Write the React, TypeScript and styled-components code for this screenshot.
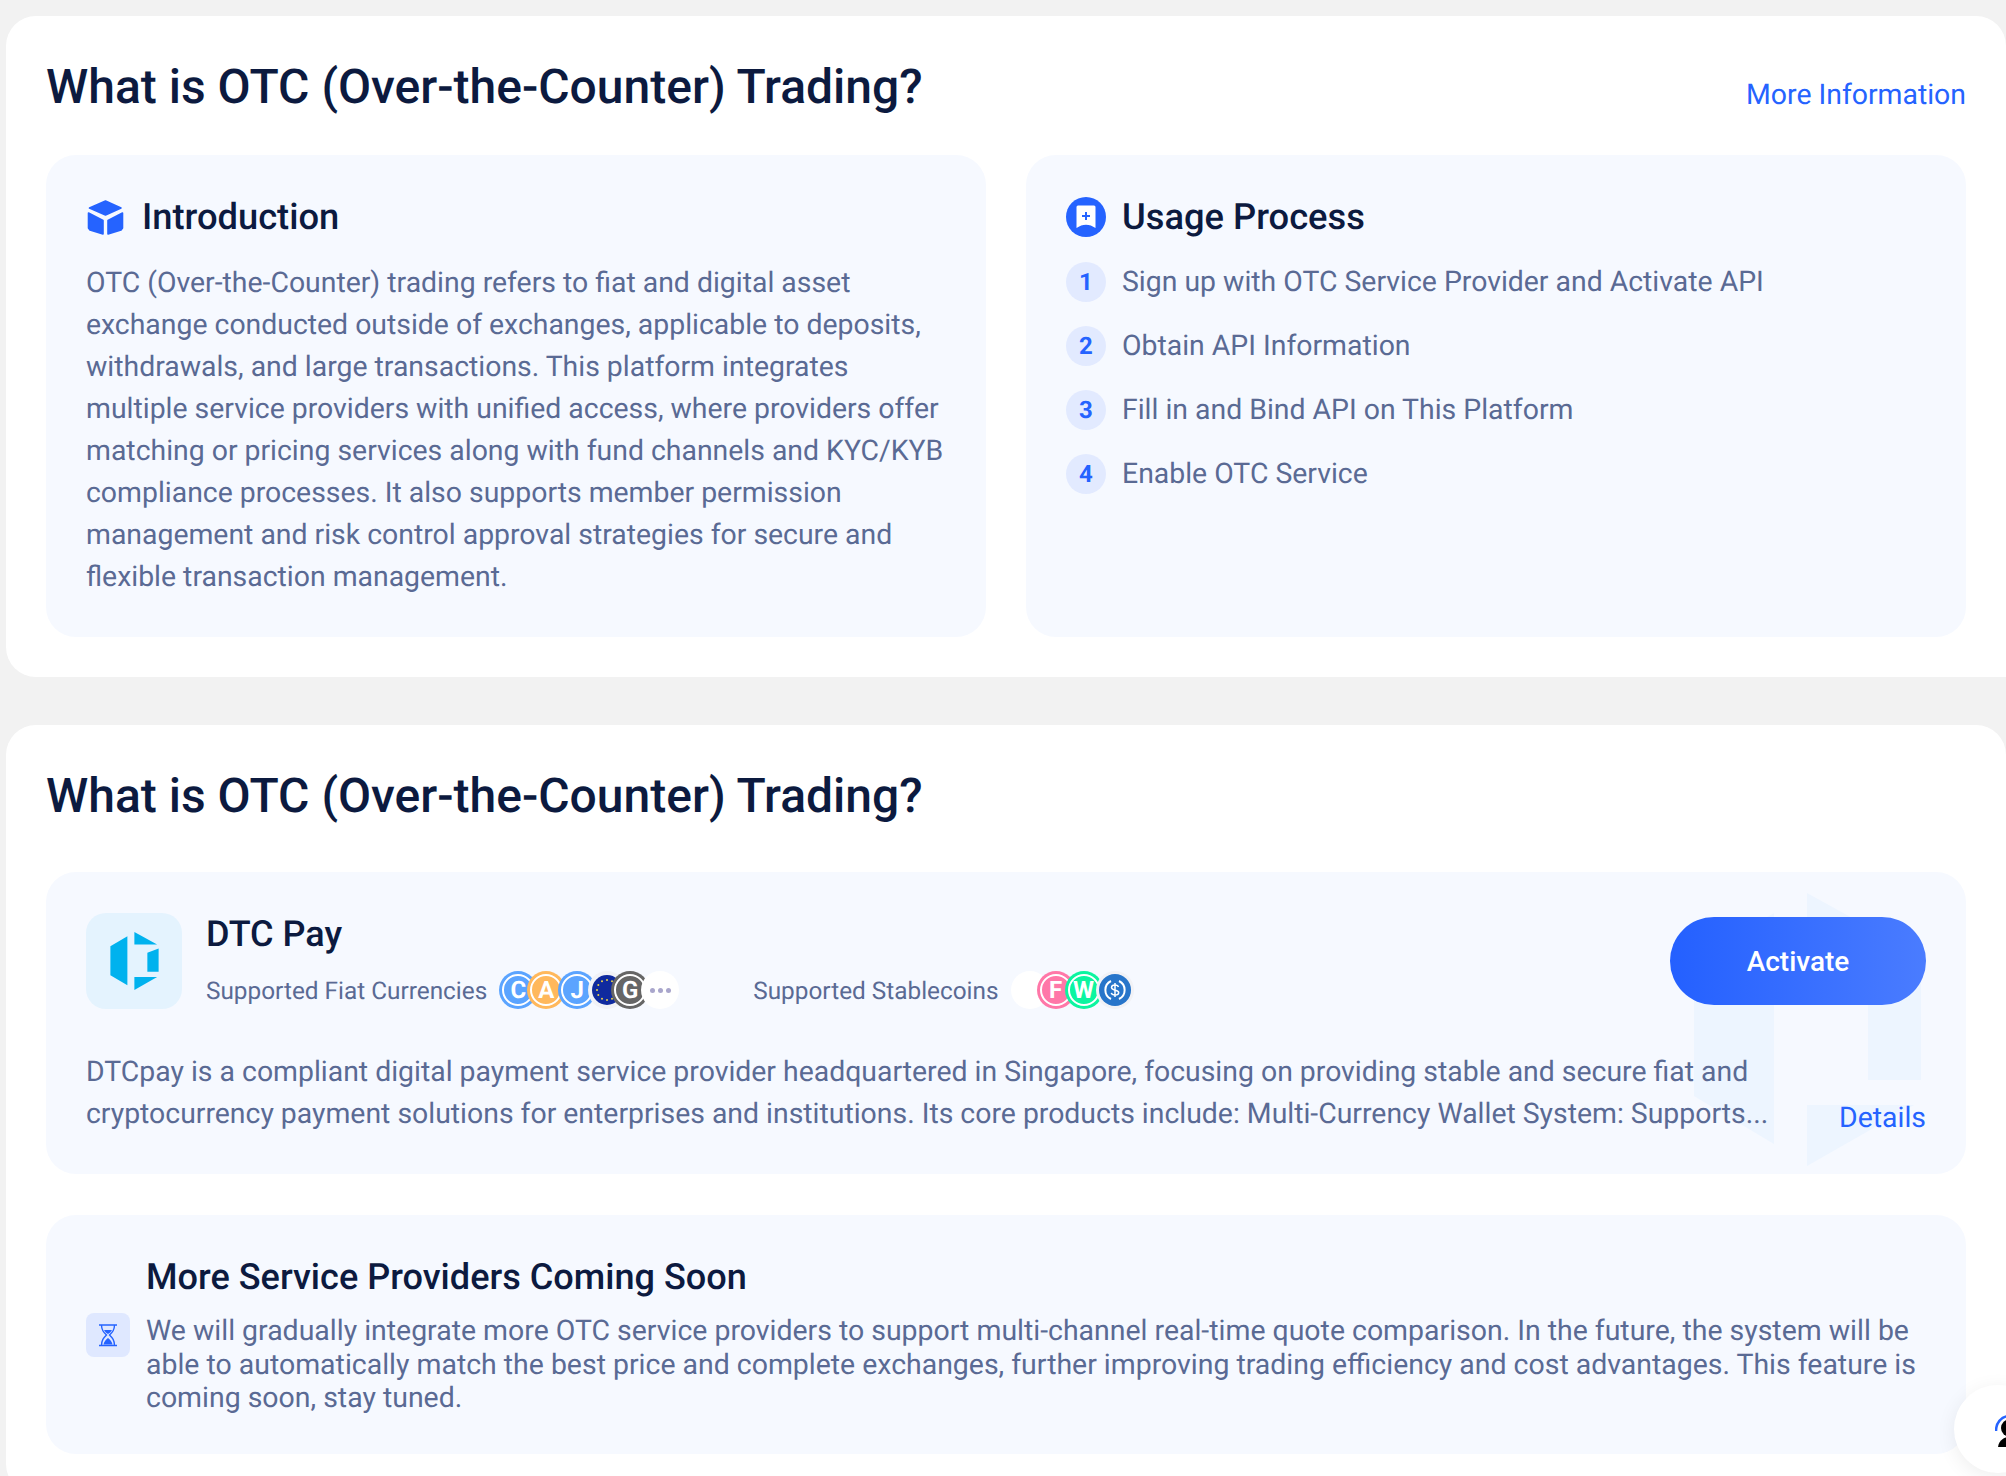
import React from 'react';
import styled, { createGlobalStyle } from 'styled-components';

const GlobalStyle = createGlobalStyle`
  html, body {
    margin: 0;
    padding: 0;
    height: 1476px;
    overflow: hidden;
    background: #f2f2f2;
    font-family: Roboto, "Liberation Sans", sans-serif;
    text-rendering: geometricPrecision;
  }
  * { box-sizing: border-box; }
`;

const Page = styled.div`
  display: flex;
  flex-direction: column;
  gap: 48px;
  padding: 16px 0 0 6px;
  width: 2006px;
`;

const Card = styled.section`
  background: #fff;
  border-radius: 30px 30px 0 30px;
  padding: 40px;
`;

const CardHeader = styled.header<{ $gap: number }>`
  display: flex;
  justify-content: space-between;
  align-items: flex-end;
  margin-bottom: ${(p) => p.$gap}px;
`;

const Title = styled.h1`
  margin: 0;
  padding-top: 1px;
  font-size: 48px;
  line-height: 60px;
  font-weight: 500;
  color: #0c1a3f;
`;

const MoreLink = styled.a`
  margin-bottom: 1px;
  font-size: 28.4px;
  line-height: 42px;
  color: #2563ff;
`;

const Columns = styled.div`
  display: grid;
  grid-template-columns: 1fr 1fr;
  gap: 40px;
`;

const Panel = styled.div`
  position: relative;
  background: #f6f9ff;
  border-radius: 30px;
  padding: 41px 40px 39px;
  overflow: hidden;
`;

const PanelHeading = styled.h2`
  display: flex;
  align-items: center;
  gap: 16px;
  margin: 0 0 24px;
  font-size: 36.3px;
  line-height: 42px;
  font-weight: 500;
  color: #0c1a3f;
`;

const Body = styled.p`
  margin: 0;
  font-size: 28.4px;
  line-height: 42px;
  color: #5a6a94;
`;

const Steps = styled.ol`
  display: flex;
  flex-direction: column;
  gap: 24px;
  margin: 0;
  padding: 0;
  list-style: none;
`;

const Step = styled.li`
  display: flex;
  align-items: center;
  gap: 16px;
  font-size: 28.4px;
  line-height: 40px;
  color: #5a6a94;
`;

const StepNo = styled.span`
  display: flex;
  align-items: center;
  justify-content: center;
  width: 40px;
  height: 40px;
  border-radius: 50%;
  background: #e2eaff;
  color: #2563ff;
  font-size: 24px;
  font-weight: 700;
`;

const Watermark = styled.svg`
  position: absolute;
  left: 1648px;
  top: 21px;
  width: 227px;
  height: 273px;
  fill: #edf5ff;
`;

const ProviderTop = styled.div`
  position: relative;
  display: flex;
  align-items: center;
  gap: 24px;
  margin-bottom: 42px;
`;

const LogoBox = styled.div`
  display: flex;
  align-items: center;
  justify-content: center;
  width: 96px;
  height: 96px;
  border-radius: 20px;
  background: #e4f3fe;
`;

const ProviderInfo = styled.div`
  flex: 1;
  display: flex;
  flex-direction: column;
  gap: 16px;
`;

const ProviderName = styled.h3`
  margin: 0;
  font-size: 36px;
  line-height: 42px;
  font-weight: 500;
  color: #0c1a3f;
`;

const SupportRow = styled.div`
  display: flex;
  align-items: center;
  gap: 74px;
`;

const SupportGroup = styled.div`
  display: flex;
  align-items: center;
  gap: 12px;
  font-size: 24.35px;
  color: #5a6a94;
`;

const Coins = styled.div`
  display: flex;
  align-items: center;
`;

const Coin = styled.span<{ $bg: string; $step?: number }>`
  position: relative;
  display: flex;
  align-items: center;
  justify-content: center;
  width: 38px;
  height: 38px;
  margin-right: ${(p) => (p.$step ?? 28) - 38}px;
  border-radius: 50%;
  background: ${(p) => p.$bg};
  color: #fff;
  font-size: 24px;
  font-weight: 700;
  &::after {
    content: '';
    position: absolute;
    inset: 3px;
    border: 2px solid #fff;
    border-radius: 50%;
  }
`;

const PlainCoin = styled.span<{ $bg: string; $step: number }>`
  position: relative;
  display: flex;
  align-items: center;
  justify-content: center;
  gap: 3px;
  width: 38px;
  height: 38px;
  margin-right: ${(p) => p.$step - 38}px;
  border-radius: 50%;
  background: ${(p) => p.$bg};
`;

const Dot = styled.i`
  width: 5px;
  height: 5px;
  border-radius: 50%;
  background: #a9a6cc;
`;

const ActivateButton = styled.button`
  width: 256px;
  height: 88px;
  border: 0;
  border-radius: 44px;
  background: linear-gradient(90deg, #2460ff, #4a7cff);
  color: #fff;
  font-family: inherit;
  font-size: 28px;
  font-weight: 500;
`;

const DescRow = styled.div`
  position: relative;
  display: flex;
  align-items: flex-end;
  justify-content: space-between;
`;

const Desc = styled(Body)`
  width: 1700px;
`;

const DetailsLink = styled.a`
  font-size: 28.4px;
  line-height: 42px;
  margin-bottom: -4px;
  color: #2563ff;
`;

const SoonPanel = styled(Panel)`
  display: flex;
  align-items: center;
  gap: 16px;
  margin-top: 41px;
`;

const SoonIcon = styled.div`
  flex: none;
  display: flex;
  align-items: center;
  justify-content: center;
  width: 44px;
  height: 44px;
  border-radius: 8px;
  background: #dfe8ff;
`;

const SoonTitle = styled.h3`
  margin: 0 0 16px;
  font-size: 36.1px;
  line-height: 42px;
  font-weight: 500;
  color: #0c1a3f;
`;

const SoonText = styled.p`
  margin: 0;
  font-size: 28.45px;
  line-height: 33.5px;
  color: #5a6a94;
`;

const HelpButton = styled.div`
  position: fixed;
  left: 1954px;
  top: 1385px;
  width: 88px;
  height: 88px;
  border-radius: 50%;
  background: #fff;
  box-shadow: 0 4px 20px rgba(0, 0, 0, 0.07);
`;

const HelpIcon = styled.svg`
  position: absolute;
  left: 41px;
  top: 30px;
  width: 36px;
  height: 36px;
`;

const CubeIcon = () => (
  <svg width="40" height="40" viewBox="0 0 40 40" fill="#2563ff" stroke="#2563ff" strokeWidth="1.6" strokeLinejoin="round">
    <path d="M19.5 4 L35 11 L19.5 18 L3.5 11 Z" />
    <path d="M2.5 16 L17 23.5 L17 37 L4 33 L2.5 31 Z" />
    <path d="M36.5 16 L22 23.5 L22 37 L35 33 L36.5 31 Z" />
  </svg>
);

const BookmarkIcon = () => (
  <svg width="40" height="40" viewBox="0 0 40 40">
    <circle cx="20" cy="20" r="20" fill="#2563ff" />
    <path d="M12 8.500H28a1.500 1.500 0 0 1 1.500 1.500V31c-6-4.500-13-4.500-19 0V10a1.500 1.500 0 0 1 1.500-1.500Z" fill="#fff" />
    <path d="M20 15v8M16 19h8" stroke="#2563ff" strokeWidth="2" />
  </svg>
);

const DtcLogo = () => (
  <svg width="49" height="58" viewBox="0 0 227 273" fill="#00b2ee">
    <DtcShapes />
  </svg>
);

const DtcShapes = () => (
  <>
    <polygon points="0,67 80,20 80,251 0,203" />
    <polygon points="113,0 220,59 113,59" />
    <polygon points="174,98 227,78 227,187 174,187" />
    <polygon points="113,212 220,212 113,273" />
  </>
);

const HourglassIcon = () => (
  <svg width="20" height="24" viewBox="0 0 20 24" fill="none" stroke="#2563ff" strokeWidth="1.400">
    <path d="M1 2h18M1 22.500h18" />
    <path d="M3.500 2c0 5 2 7 5 10-3 3-5 5-5 10.500M16.500 2c0 5-2 7-5 10 3 3 5 5 5 10.500" />
    <path d="M6 7h8c-1 2-2.500 3-4 4-1.500-1-3-2-4-4ZM5.500 21.500c.5-3 2.500-5 4.500-6.500 2 1.500 4 3.500 4.500 6.500Z" fill="#2563ff" stroke="none" />
  </svg>
);

const EuCoin = () => (
  <svg width="30" height="30" viewBox="0 0 30 30">
    <circle cx="15" cy="15" r="15" fill="#0f2a9e" />
    {Array.from({ length: 12 }).map((_, i) => (
      <circle
        key={i}
        cx={15 + 10 * Math.cos((i * Math.PI) / 6)}
        cy={15 + 10 * Math.sin((i * Math.PI) / 6)}
        r="1"
        fill="#e8d24a"
      />
    ))}
  </svg>
);

const UsdcCoin = () => (
  <svg width="32" height="32" viewBox="0 0 32 32" fill="none">
    <circle cx="16" cy="16" r="16" fill="#2775ca" />
    <path d="M12 7a10 10 0 0 0 0 18M20 7a10 10 0 0 1 0 18" stroke="#fff" strokeWidth="2" />
    <path d="M19.500 13c-.5-1.500-2-2-3.500-2-2 0-3.500 1-3.500 2.600 0 3.600 7.200 1.600 7.200 5 0 1.600-1.700 2.500-3.700 2.500-1.800 0-3.300-.7-3.700-2.200M16 9v14" stroke="#fff" strokeWidth="1.500" />
  </svg>
);

const steps = [
  'Sign up with OTC Service Provider and Activate API',
  'Obtain API Information',
  'Fill in and Bind API on This Platform',
  'Enable OTC Service',
];

export default function App() {
  return (
    <>
      <GlobalStyle />
      <Page>
        <Card>
          <CardHeader $gap={38}>
            <Title>What is OTC (Over-the-Counter) Trading?</Title>
            <MoreLink>More Information</MoreLink>
          </CardHeader>
          <Columns>
            <Panel>
              <PanelHeading>
                <CubeIcon />
                Introduction
              </PanelHeading>
              <Body>
                OTC (Over-the-Counter) trading refers to fiat and digital asset exchange conducted outside of
                exchanges, applicable to deposits, withdrawals, and large transactions. This platform integrates
                multiple service providers with unified access, where providers offer matching or pricing services
                along with fund channels and KYC/KYB compliance processes. It also supports member permission
                management and risk control approval strategies for secure and flexible transaction management.
              </Body>
            </Panel>
            <Panel>
              <PanelHeading>
                <BookmarkIcon />
                Usage Process
              </PanelHeading>
              <Steps>
                {steps.map((step, i) => (
                  <Step key={step}>
                    <StepNo>{i + 1}</StepNo>
                    {step}
                  </Step>
                ))}
              </Steps>
            </Panel>
          </Columns>
        </Card>
        <Card>
          <CardHeader $gap={46}>
            <Title>What is OTC (Over-the-Counter) Trading?</Title>
          </CardHeader>
          <Panel>
            <Watermark viewBox="0 0 227 273">
              <DtcShapes />
            </Watermark>
            <ProviderTop>
              <LogoBox>
                <DtcLogo />
              </LogoBox>
              <ProviderInfo>
                <ProviderName>DTC Pay</ProviderName>
                <SupportRow>
                  <SupportGroup>
                    Supported Fiat Currencies
                    <Coins>
                      <Coin $bg="#5ba4ff">C</Coin>
                      <Coin $bg="#ffb85c" $step={31}>A</Coin>
                      <Coin $bg="#5ba4ff" $step={30}>J</Coin>
                      <PlainCoin $bg="#f1f2f6" $step={23}>
                        <EuCoin />
                      </PlainCoin>
                      <Coin $bg="#666666" $step={30}>G</Coin>
                      <PlainCoin $bg="#ffffff" $step={38}>
                        <Dot />
                        <Dot />
                        <Dot />
                      </PlainCoin>
                    </Coins>
                  </SupportGroup>
                  <SupportGroup>
                    Supported Stablecoins
                    <Coins>
                      <PlainCoin $bg="#ffffff" $step={26} />
                      <Coin $bg="#ff77a8">F</Coin>
                      <Coin $bg="#0cf5a0" $step={31}>W</Coin>
                      <PlainCoin $bg="#f1f2f6" $step={38}>
                        <UsdcCoin />
                      </PlainCoin>
                    </Coins>
                  </SupportGroup>
                </SupportRow>
              </ProviderInfo>
              <ActivateButton>Activate</ActivateButton>
            </ProviderTop>
            <DescRow>
              <Desc>
                DTCpay is a compliant digital payment service provider headquartered in Singapore, focusing on
                providing stable and secure fiat and cryptocurrency payment solutions for enterprises and institutions.
                Its core products include: Multi-Currency Wallet System: Supports...
              </Desc>
              <DetailsLink>Details</DetailsLink>
            </DescRow>
          </Panel>
          <SoonPanel>
            <SoonIcon>
              <HourglassIcon />
            </SoonIcon>
            <div>
              <SoonTitle>More Service Providers Coming Soon</SoonTitle>
              <SoonText>
                We will gradually integrate more OTC service providers to support multi-channel real-time quote
                comparison. In the future, the system will be able to automatically match the best price and complete
                exchanges, further improving trading efficiency and cost advantages. This feature is coming soon, stay
                tuned.
              </SoonText>
            </div>
          </SoonPanel>
        </Card>
      </Page>
      <HelpButton>
        <HelpIcon viewBox="0 0 36 36">
          <path d="M1 16C1 8 6 2 13 1" fill="none" stroke="#2563ff" strokeWidth="2.500" />
          <circle cx="15" cy="13" r="9" fill="#000" />
          <path d="M3 32c1-7 6-10 12-10s11 3 12 10Z" fill="#000" />
        </HelpIcon>
      </HelpButton>
    </>
  );
}
